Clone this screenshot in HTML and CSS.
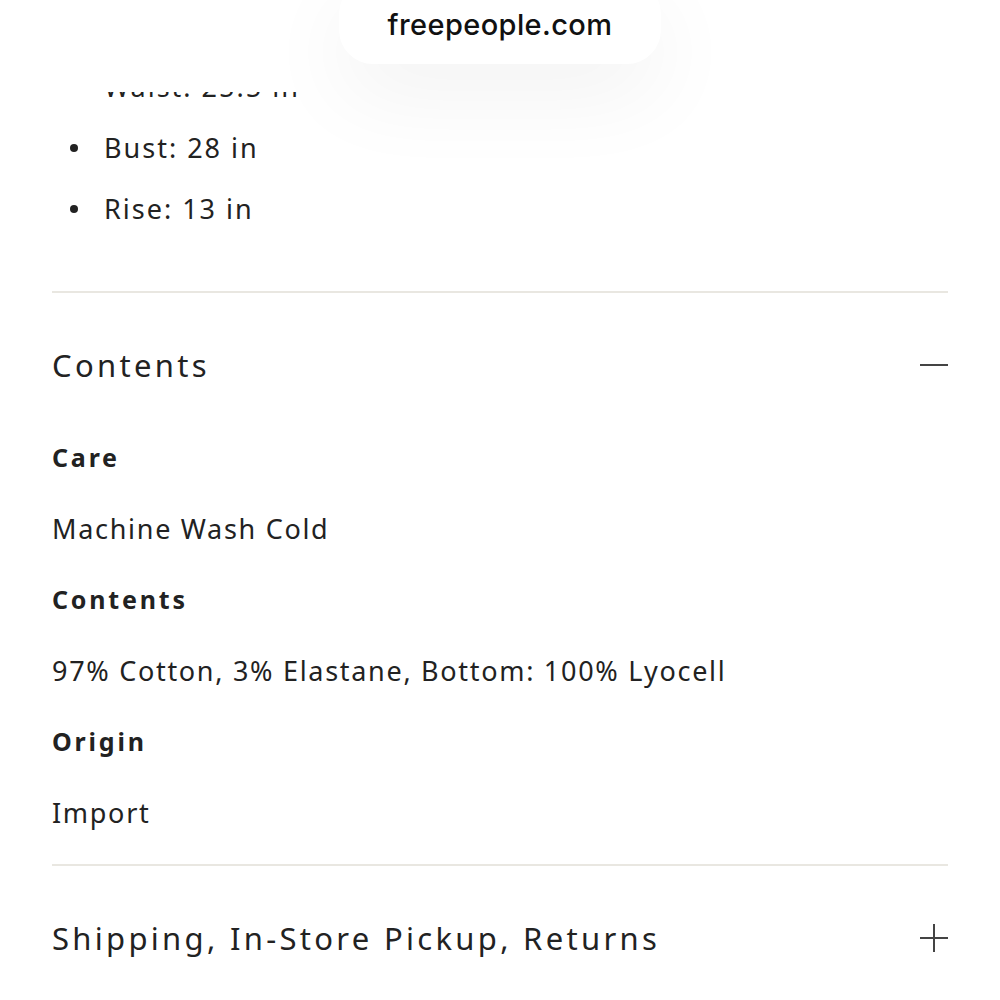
FILE: index.html
```html
<!DOCTYPE html>
<html>
<head>
<meta charset="utf-8">
<link rel="stylesheet" href="styles.css">
</head>
<body>
<div class="topbar">
  <div class="pill">freepeople.com</div>
</div>
<main class="page">
  <ul class="measures">
    <li>Waist: 25.5 in</li>
    <li>Bust: 28 in</li>
    <li>Rise: 13 in</li>
  </ul>
  <section class="acc open">
    <div class="acc-head">
      <span>Contents</span>
      <span class="icon minus"></span>
    </div>
    <div class="acc-body">
      <div class="row label">Care</div>
      <div class="row">Machine Wash Cold</div>
      <div class="row label">Contents</div>
      <div class="row">97% Cotton, 3% Elastane, Bottom: 100% Lyocell</div>
      <div class="row label">Origin</div>
      <div class="row">Import</div>
    </div>
  </section>
  <section class="acc">
    <div class="acc-head">
      <span>Shipping, In-Store Pickup, Returns</span>
      <span class="icon plus"></span>
    </div>
  </section>
</main>
</body>
</html>
```

FILE: styles.css
```css
html, body {
  margin: 0;
  padding: 0;
  background: #fff;
}
body {
  font-family: "Noto Sans", "Open Sans", sans-serif;
  color: #222;
  overflow: hidden;
  height: 1000px;
}
.topbar {
  position: fixed;
  top: 0;
  left: 0;
  right: 0;
  height: 92px;
  background: #fff;
  display: flex;
  justify-content: center;
  z-index: 2;
}
.pill {
  margin-top: -20px;
  width: 322px;
  height: 84px;
  border-radius: 34px;
  background: #fff;
  box-shadow: 0 30px 90px rgba(0,0,0,0.055);
  display: flex;
  align-items: flex-end;
  justify-content: center;
  padding-bottom: 22px;
  box-sizing: border-box;
  font-family: Inter, "Liberation Sans", sans-serif;
  font-size: 29px;
  font-weight: 500;
  letter-spacing: 0.4px;
  color: #111;
}
.page {
  padding: 0 52px;
}
.measures {
  margin: 56px 0 0;
  padding: 0 0 0 52px;
  list-style: none;
}
.measures li {
  position: relative;
  height: 61px;
  line-height: 61px;
  font-size: 27px;
  letter-spacing: 2px;
}
.measures li::before {
  content: "";
  position: absolute;
  left: -34px;
  top: 27px;
  width: 8px;
  height: 8px;
  border-radius: 50%;
  background: #222;
}
.acc {
  border-top: 2px solid #e9e7e1;
}
.measures + .acc {
  margin-top: 52px;
}
.acc.open {
  padding-bottom: 16px;
}
.acc-head {
  padding-top: 36px;
  height: 72px;
  display: flex;
  align-items: center;
  justify-content: space-between;
  font-size: 31px;
  letter-spacing: 3.3px;
  color: #222;
}
.acc-body {
  padding-top: 21px;
}
.row {
  height: 71px;
  line-height: 71px;
  font-size: 27px;
  letter-spacing: 1.7px;
}
.row.label {
  font-weight: 700;
  font-size: 25px;
  letter-spacing: 2.8px;
}
.icon {
  position: relative;
  width: 28px;
  height: 28px;
}
.icon::before, .icon::after {
  content: "";
  position: absolute;
  background: #444;
}
.icon::before {
  left: 0;
  right: 0;
  top: 13px;
  height: 2px;
}
.plus::after {
  top: 0;
  bottom: 0;
  left: 13px;
  width: 2px;
}
```
